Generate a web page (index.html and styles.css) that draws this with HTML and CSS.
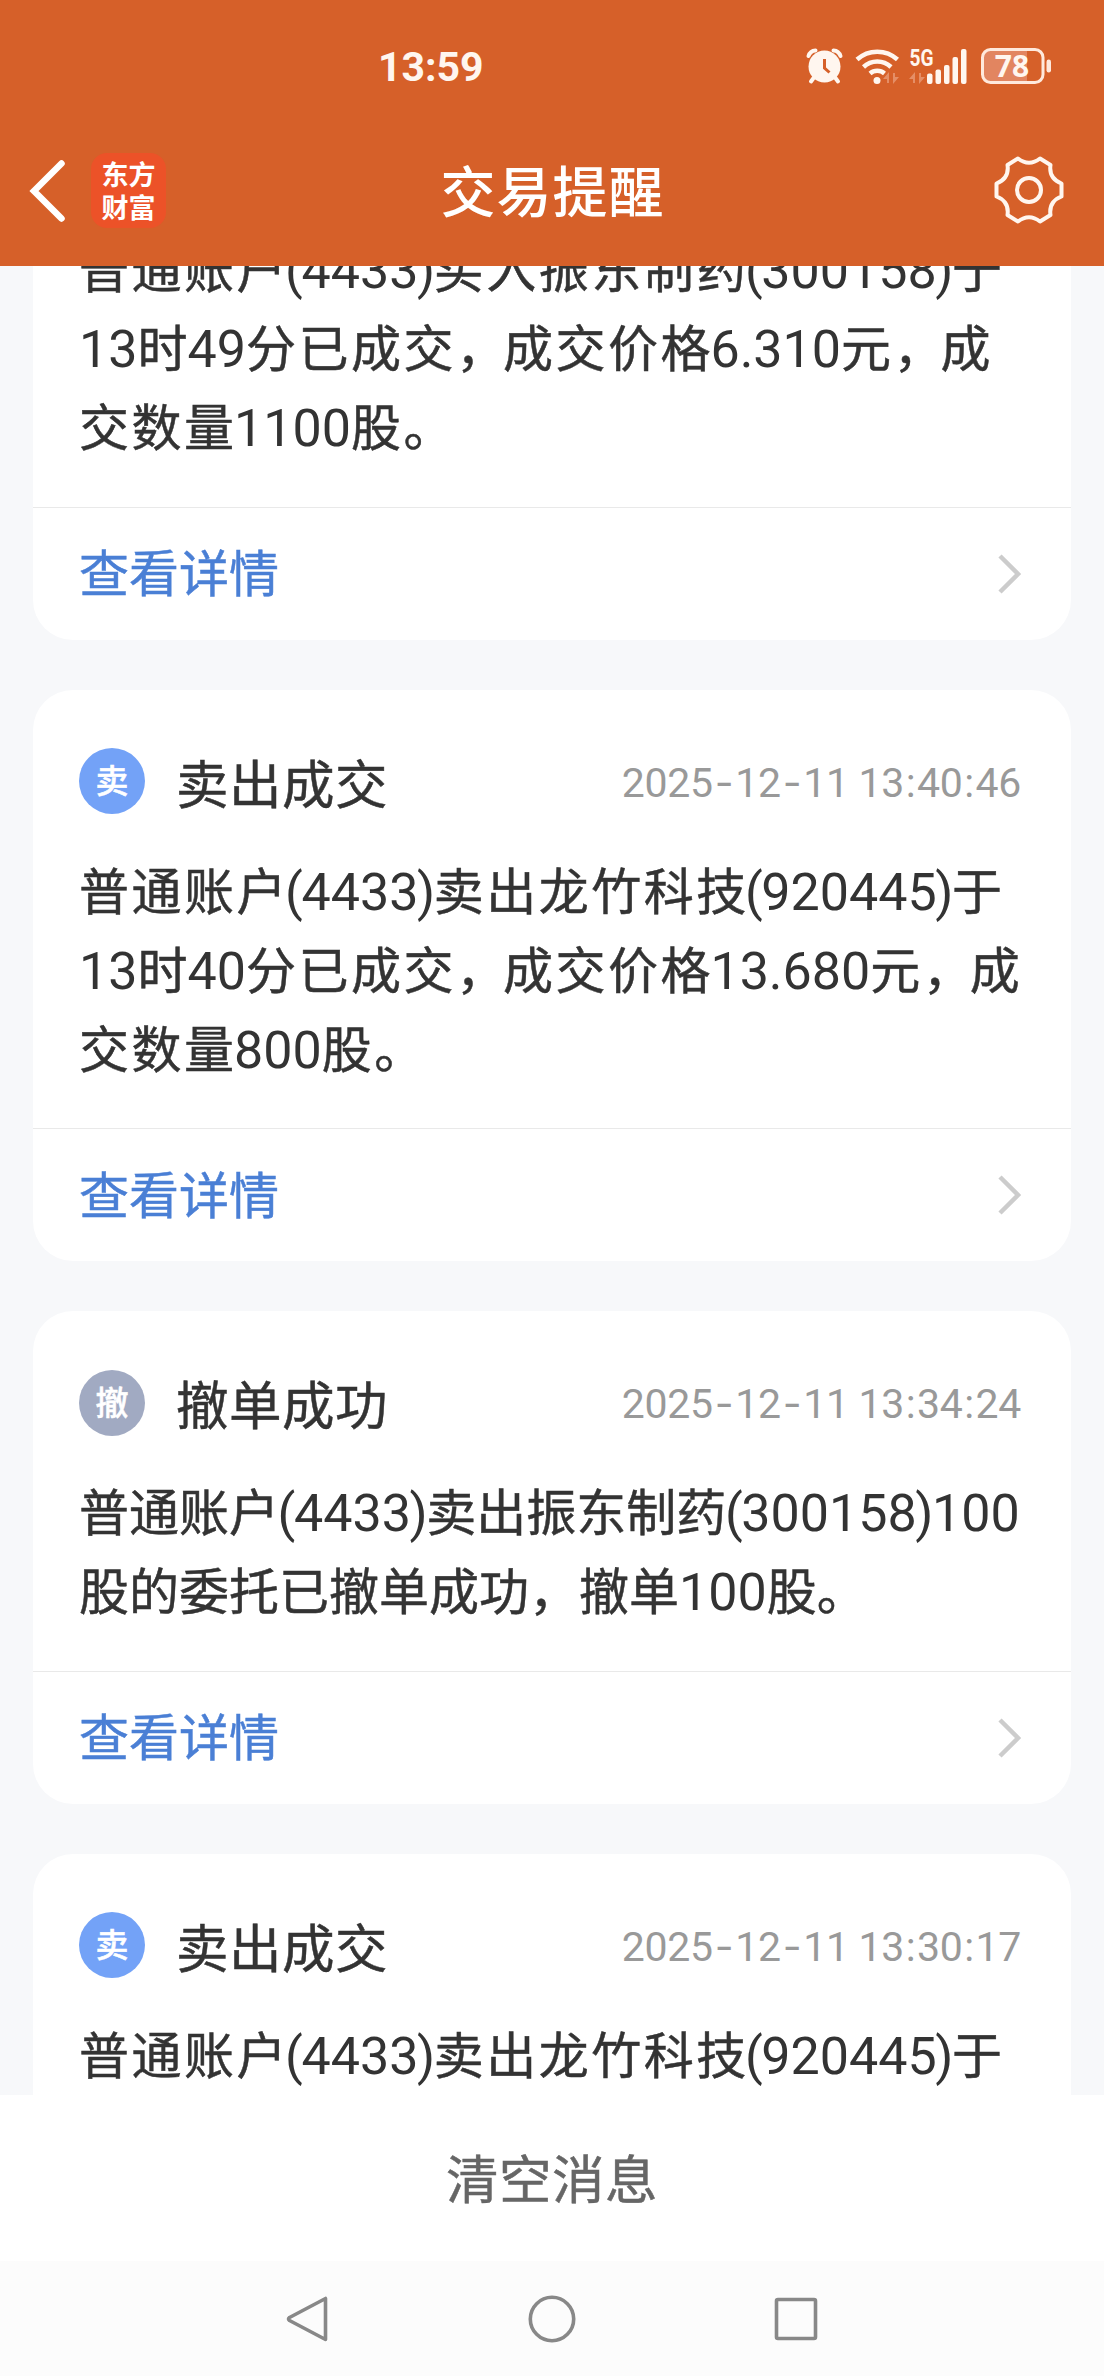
FILE: index.html
```html
<!DOCTYPE html>
<html lang="zh-CN">
<head>
  <meta charset="UTF-8" />
  <meta name="viewport" content="width=device-width, initial-scale=1" />
  <title>交易提醒</title>
  <link rel="stylesheet" href="styles.css">
</head>
<body>

  <header class="header">
    <!-- 状态栏 -->
    <div class="status">
      <span class="clock">13:59</span>
      <svg class="status-icons" width="300" height="70" viewBox="0 0 300 70">
        <!-- 闹钟 -->
        <g fill="none" stroke="#fff6ef" stroke-width="4" stroke-linecap="round">
          <path d="M28.500 26a8 8 0 0 1 7-5.500M60.500 26a8 8 0 0 0-7-5.500M35 46l-4 5.500M54 46l4 5.500"/>
        </g>
        <circle cx="44.500" cy="36.500" r="16" fill="#fff6ef"/>
        <path d="M44.500 29v9l5 4.500" fill="none" stroke="#d66029" stroke-width="3"/>
        <!-- WiFi -->
        <g fill="none" stroke="#fff6ef" stroke-width="4.500">
          <path d="M77 29.500a30 30 0 0 1 40.500 0M83.500 37a20 20 0 0 1 27.500 0M90 43.500a11 11 0 0 1 14.500 0"/>
        </g>
        <circle cx="97" cy="50.500" r="3.500" fill="#fff6ef"/>
        <path d="M103 49l6-7v11h-2v-4zM113 43v11l6-7h-4v-4zM129 49l6-7v11h-2v-4zM139 43v11l6-7h-4v-4z" fill="#e58e66"/>
        <!-- 信号 -->
        <g fill="#fff6ef">
          <rect x="147" y="43.500" width="5.500" height="10.500" rx="2"/>
          <rect x="155.500" y="39.500" width="5.500" height="14.500" rx="2"/>
          <rect x="164" y="35" width="5.500" height="19" rx="2"/>
          <rect x="172.500" y="27" width="5.500" height="27" rx="2"/>
          <rect x="181" y="19" width="5.500" height="35" rx="2"/>
        </g>
        <text class="net" x="129.500" y="36" textLength="24" lengthAdjust="spacingAndGlyphs">5G</text>
        <!-- 电池 -->
        <path d="M209 19.500h38v33h-38a6.500 6.500 0 0 1-6.500-6.500v-20a6.500 6.500 0 0 1 6.500-6.500z" fill="#e28560"/>
        <rect x="202.500" y="19.500" width="60.500" height="33" rx="8" fill="none" stroke="#ffe9dc" stroke-width="3"/>
        <rect x="266.500" y="29.500" width="4.500" height="13" rx="2.200" fill="#ffe9dc"/>
        <text class="level" x="232" y="46.500" text-anchor="middle">78</text>
      </svg>
    </div>

    <!-- 标题栏 -->
    <div class="navbar">
      <div class="nav-left">
        <svg width="42" height="66" viewBox="0 0 42 66">
          <path d="M36.500 6.500L9 34l27.500 27.500" fill="none" stroke="#fff" stroke-width="6.500" stroke-linecap="round"/>
        </svg>
        <div class="logo"><span>东方</span><span>财富</span></div>
      </div>
      <h1>交易提醒</h1>
      <svg class="gear" width="74" height="74" viewBox="-37 -37 74 74" fill="none" stroke="#fff6ef" stroke-width="4" stroke-linejoin="round">
        <path d="M-11-31.500Q0-23 11-31.500L21.500-25Q19.500-11.500 32.500-6.500V6.500Q19.500 11.500 21.500 25L11 31.500Q0 23-11 31.500L-21.500 25Q-19.500 11.500-32.500 6.500V-6.500Q-19.500-11.500-21.500-25Z"/>
        <circle r="12"/>
      </svg>
    </div>
  </header>

  <main class="list">
    <section class="card card-cut">
      <div class="text wide">
        <p>普通账户<span class="num"><i>(</i>4433<i>)</i></span>买入振东制药<span class="num"><i>(</i>300158<i>)</i></span>于</p>
        <p><span class="num first">13</span>时<span class="num">49</span>分已成交<span class="comma">，</span>成交价格<span class="num">6.310</span>元<span class="comma">，</span>成</p>
        <p>交数量<span class="num">1100</span>股。</p>
      </div>
      <a class="more"><span>查看详情</span>
        <svg width="24" height="42" viewBox="0 0 24 42"><path d="M2 3l18 18L2 39" fill="none" stroke="#ccc" stroke-width="4.500"/></svg>
      </a>
    </section>

    <section class="card">
      <div class="head">
        <span class="badge sell">卖</span>
        <h2>卖出成交</h2>
        <time>2025<i>-</i>12<i>-</i>11 13<b>:</b>40<b>:</b>46</time>
      </div>
      <div class="text wide">
        <p>普通账户<span class="num"><i>(</i>4433<i>)</i></span>卖出龙竹科技<span class="num"><i>(</i>920445<i>)</i></span>于</p>
        <p><span class="num first">13</span>时<span class="num">40</span>分已成交<span class="comma">，</span>成交价格<span class="num">13.680</span>元<span class="comma">，</span>成</p>
        <p>交数量<span class="num">800</span>股。</p>
      </div>
      <a class="more"><span>查看详情</span>
        <svg width="24" height="42" viewBox="0 0 24 42"><path d="M2 3l18 18L2 39" fill="none" stroke="#ccc" stroke-width="4.500"/></svg>
      </a>
    </section>

    <section class="card">
      <div class="head">
        <span class="badge cancel">撤</span>
        <h2>撤单成功</h2>
        <time>2025<i>-</i>12<i>-</i>11 13<b>:</b>34<b>:</b>24</time>
      </div>
      <div class="text">
        <p>普通账户<span class="num"><i>(</i>4433<i>)</i></span>卖出振东制药<span class="num"><i>(</i>300158<i>)</i>100</span></p>
        <p>股的委托已撤单成功，撤单<span class="num">100</span>股。</p>
      </div>
      <a class="more"><span>查看详情</span>
        <svg width="24" height="42" viewBox="0 0 24 42"><path d="M2 3l18 18L2 39" fill="none" stroke="#ccc" stroke-width="4.500"/></svg>
      </a>
    </section>

    <section class="card">
      <div class="head">
        <span class="badge sell">卖</span>
        <h2>卖出成交</h2>
        <time>2025<i>-</i>12<i>-</i>11 13<b>:</b>30<b>:</b>17</time>
      </div>
      <div class="text wide">
        <p>普通账户<span class="num"><i>(</i>4433<i>)</i></span>卖出龙竹科技<span class="num"><i>(</i>920445<i>)</i></span>于</p>
      </div>
    </section>
  </main>

  <div class="clear">清空消息</div>

  <!-- 系统导航键 -->
  <nav class="keys">
    <svg width="50" height="56" viewBox="0 0 50 56"><path d="M42.500 7.500v41L6.500 29.500q-2-1.500 0-3z"/></svg>
    <svg width="50" height="56" viewBox="0 0 50 56"><circle cx="25" cy="28" r="21.700"/></svg>
    <svg width="50" height="56" viewBox="0 0 50 56"><rect x="5.500" y="8.500" width="39" height="39" rx="1.500"/></svg>
  </nav>

</body>
</html>
```
FILE: styles.css
```css
* {
  box-sizing: border-box;
}

body {
  margin: 0;
  width: 1104px;
  height: 2376px;
  overflow: hidden;
  display: flex;
  flex-direction: column;
  background: #f7f8fa;
  color: #333;
  font-family: 'Noto Sans CJK SC', sans-serif;
}

h1, h2, p {
  margin: 0;
  font-weight: 400;
}

i, b {
  font-style: normal;
  font-weight: 400;
}

/* 顶部 */
.header {
  height: 266px;
  flex: none;
  background: #d66029;
  color: #fff;
}

.status {
  height: 114px;
  padding: 30px 24px 0 378px;
  display: flex;
  justify-content: space-between;
}

.clock {
  font: 700 41px/75px Roboto, sans-serif;
  color: #fff6ef;
}

.status-icons text {
  font-family: 'Noto Sans', sans-serif;
  font-weight: 700;
  fill: #fff6ef;
}

.status-icons .net {
  font-family: Roboto, sans-serif;
  font-size: 23px;
}

.level {
  font-size: 30px;
}

.navbar {
  height: 152px;
  padding: 0 38px 0 25px;
  display: grid;
  grid-template-columns: 1fr auto 1fr;
  align-items: center;
}

.nav-left {
  display: flex;
  align-items: center;
  gap: 24px;
}

.logo {
  width: 75px;
  height: 75px;
  padding-top: 4px;
  border-radius: 16px;
  background: #ec5228;
  font-size: 27px;
  font-weight: 700;
  line-height: 33px;
  text-align: center;
}

.logo span {
  display: block;
}

.navbar h1 {
  margin: 0 -7px 4px 7px;
  font-size: 55px;
  font-weight: 500;
  letter-spacing: 1px;
}

.gear {
  justify-self: end;
}

/* 消息列表 */
.list {
  flex: 1;
  min-height: 0;
  overflow: hidden;
  padding: 0 33px;
}

.card {
  margin-bottom: 50px;
  border-radius: 40px;
  background: #fff;
  -webkit-text-stroke: 0.500px;
}

.card-cut {
  margin-top: -39px;
}

.head {
  height: 162px;
  padding: 28px 50px 0 46px;
  display: flex;
  align-items: center;
}

.badge {
  width: 66px;
  height: 66px;
  margin-bottom: 7px;
  border-radius: 50%;
  color: #fff;
  font-size: 33px;
  font-weight: 500;
  line-height: 63px;
  text-align: center;
}

.sell {
  background: #73a2f7;
}

.cancel {
  background: #a1aac2;
}

.head h2 {
  margin: 0 0 8px 31px;
  font-size: 52.500px;
  letter-spacing: 0.500px;
}

.head time {
  margin: 0 0 6px auto;
  color: #999;
  font-family: Roboto, sans-serif;
  font-size: 41px;
  letter-spacing: -0.300px;
  -webkit-text-stroke: 0;
}

.head time i {
  display: inline-block;
  width: 22.500px;
  text-align: center;
  font-family: Inter, sans-serif;
}

.head time b {
  display: inline-block;
  width: 13px;
  text-align: center;
}

.text {
  padding: 0 0 42px 46px;
  margin-top: -3px;
  font-size: 50px;
}

.text p {
  height: 79.200px;
  line-height: 79.200px;
  white-space: nowrap;
}

.wide {
  letter-spacing: 2.500px;
}

.num {
  font-family: Roboto, sans-serif;
  font-size: 52px;
  line-height: 1;
  letter-spacing: 0;
  -webkit-text-stroke: 0;
}

.wide .num {
  margin-left: -2.500px;
}

.wide .first {
  margin-left: 0;
}

.num i {
  margin: 0 -1.400px;
}

.wide .comma {
  letter-spacing: -3px;
}

.more {
  height: 133px;
  padding: 0 49px 0 46px;
  border-top: 1px solid #e9e9e9;
  display: flex;
  align-items: center;
  justify-content: space-between;
  font-size: 50px;
  color: #4a7fd5;
}

.more span {
  margin-bottom: 7px;
}

/* 底部 */
.clear {
  height: 166px;
  flex: none;
  background: #fff;
  color: #666;
  font-size: 52.500px;
  letter-spacing: 0.500px;
  line-height: 162px;
  text-align: center;
  -webkit-text-stroke: 0.500px;
}

.keys {
  height: 115px;
  flex: none;
  padding: 0 283px;
  background: #fcfcfc;
  display: flex;
  align-items: center;
  justify-content: space-between;
}

.keys svg {
  fill: none;
  stroke: #888;
  stroke-width: 3.600;
  stroke-linejoin: round;
}
```
